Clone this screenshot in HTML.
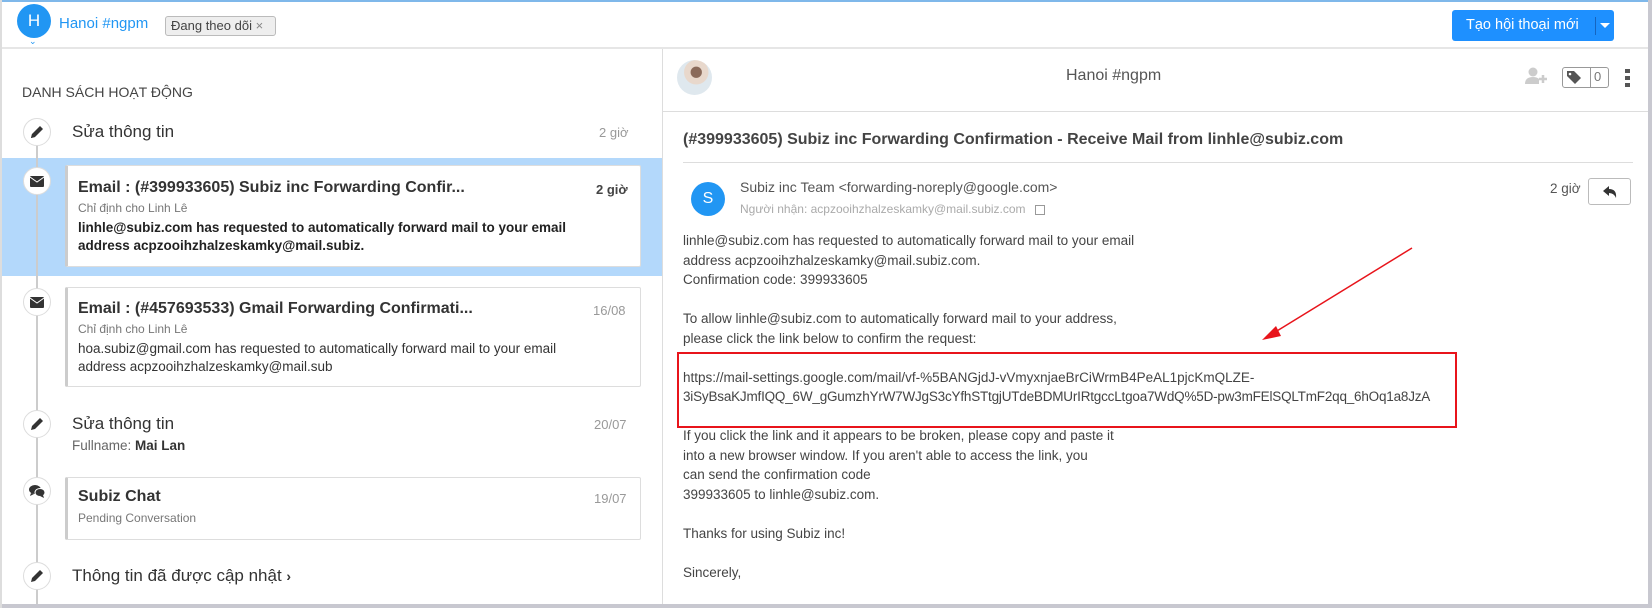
<!DOCTYPE html>
<html><head><meta charset="utf-8"><style>
*{margin:0;padding:0;box-sizing:border-box}
body{width:1652px;height:608px;overflow:hidden;background:#fff;font-family:"Liberation Sans",sans-serif;color:#333;position:relative}
.a{position:absolute;white-space:nowrap}
.circ{position:absolute;width:28px;height:28px;border-radius:50%;background:#fff;border:1px solid #ddd;display:flex;align-items:center;justify-content:center;left:23px}
.card{position:absolute;left:65px;width:576px;background:#fff;border:1px solid #ddd;border-left:3px solid #ccc;border-radius:2px}
.t{color:#999;font-size:13px}
.body{position:absolute;left:683px;top:231px;font-size:13.5px;line-height:19.5px;color:#444;white-space:pre}
</style></head><body>
<div class="a" style="left:0;top:0;width:1652px;height:2px;background:#7fb8ea"></div>
<div class="a" style="left:0;top:47px;width:1652px;height:2px;background:#e6e6e6"></div>
<div class="a" style="left:17px;top:4px;width:34px;height:34px;border-radius:50%;background:#2196f3;color:#fff;font-size:17px;text-align:center;line-height:34px">H</div>
<div class="a" style="left:29px;top:36px;color:#2196f3;font-size:9px">&#8964;</div>
<div class="a" style="left:59px;top:15px;color:#2196f3;font-size:15px">Hanoi #ngpm</div>
<div class="a" style="left:165px;top:16px;width:111px;height:20px;background:#eee;border:1px solid #bbb;border-radius:3px;font-size:13px;line-height:18px;padding-left:5px;color:#444">Đang theo dõi <span style="color:#888">×</span></div>
<div class="a" style="left:1452px;top:10px;width:162px;height:31px;background:#1e90ff;border-radius:3px;color:#fff;font-size:14.5px;line-height:31px;padding-left:14px">Tạo hội thoại mới</div>
<div class="a" style="left:1595px;top:17px;width:1px;height:18px;background:#1565c0"></div>
<div class="a" style="left:1600px;top:23px;width:0;height:0;border-left:5px solid transparent;border-right:5px solid transparent;border-top:5px solid #fff"></div>

<!-- left -->
<div class="a" style="left:662px;top:49px;width:1px;height:559px;background:#ddd"></div>
<div class="a" style="left:22px;top:84px;font-size:14px;color:#444">DANH SÁCH HOẠT ĐỘNG</div>
<div class="a" style="left:0;top:158px;width:662px;height:118px;background:#b3d8fb"></div>
<div class="a" style="left:36px;top:140px;width:2px;height:468px;background:#ccc"></div>

<div class="circ" style="top:118px"><svg width="14" height="14"><path d="M1 13l1-4 8-8 3 3-8 8z" fill="#333"/><path d="M1 13l1-4 3 3z" fill="#333"/></svg></div>
<div class="a" style="left:72px;top:122px;font-size:17px;color:#333">Sửa thông tin</div>
<div class="a t" style="left:599px;top:125px">2 giờ</div>

<div class="circ" style="top:167px"><svg width="14" height="11"><rect width="14" height="11" rx="1" fill="#333"/><path d="M0 1L7 6L14 1" stroke="#fff" fill="none"/></svg></div>
<div class="card" style="top:165px;height:102px"></div>
<div class="a" style="left:78px;top:179px;font-size:16px;font-weight:bold">Email : (#399933605) Subiz inc Forwarding Confir...</div>
<div class="a" style="left:596px;top:182px;font-size:13px;font-weight:bold;color:#444">2 giờ</div>
<div class="a t" style="left:78px;top:201px;font-size:12px;color:#777">Chỉ định cho Linh Lê</div>
<div class="a" style="left:78px;top:219px;font-size:13.5px;font-weight:bold;line-height:18px;color:#222">linhle@subiz.com has requested to automatically forward mail to your email<br>address acpzooihzhalzeskamky@mail.subiz.</div>

<div class="circ" style="top:288px"><svg width="14" height="11"><rect width="14" height="11" rx="1" fill="#333"/><path d="M0 1L7 6L14 1" stroke="#fff" fill="none"/></svg></div>
<div class="card" style="top:287px;height:100px"></div>
<div class="a" style="left:78px;top:300px;font-size:16px;font-weight:bold">Email : (#457693533) Gmail Forwarding Confirmati...</div>
<div class="a t" style="left:593px;top:303px">16/08</div>
<div class="a t" style="left:78px;top:322px;font-size:12px;color:#777">Chỉ định cho Linh Lê</div>
<div class="a" style="left:78px;top:340px;font-size:13.5px;line-height:18px;color:#333">hoa.subiz@gmail.com has requested to automatically forward mail to your email<br>address acpzooihzhalzeskamky@mail.sub</div>

<div class="circ" style="top:410px"><svg width="14" height="14"><path d="M1 13l1-4 8-8 3 3-8 8z" fill="#333"/></svg></div>
<div class="a" style="left:72px;top:414px;font-size:17px">Sửa thông tin</div>
<div class="a t" style="left:594px;top:417px">20/07</div>
<div class="a" style="left:72px;top:438px;font-size:13.5px;color:#666">Fullname: <b style="color:#333">Mai Lan</b></div>

<div class="circ" style="top:477px"><svg width="16" height="14"><ellipse cx="6" cy="5.5" rx="6" ry="4.5" fill="#333"/><path d="M2 9l-1 3 4-2z" fill="#333"/><ellipse cx="11" cy="8.5" rx="5" ry="4" fill="#333" stroke="#fff" stroke-width="1"/><path d="M14 11l1 3-4-2z" fill="#333"/></svg></div>
<div class="card" style="top:477px;height:63px"></div>
<div class="a" style="left:78px;top:488px;font-size:16px;font-weight:bold">Subiz Chat</div>
<div class="a t" style="left:594px;top:491px">19/07</div>
<div class="a" style="left:78px;top:511px;font-size:12px;color:#777">Pending Conversation</div>

<div class="circ" style="top:562px"><svg width="14" height="14"><path d="M1 13l1-4 8-8 3 3-8 8z" fill="#333"/></svg></div>
<div class="a" style="left:72px;top:566px;font-size:17px">Thông tin đã được cập nhật <b style="font-size:14px">›</b></div>

<!-- right -->
<div class="a" style="left:677px;top:60px;width:35px;height:35px;border-radius:50%;background:radial-gradient(circle at 55% 35%,#8a6a5a 0 18%,#e8d8cc 20% 40%,#dfe8ee 42%)"></div>
<div class="a" style="left:1066px;top:67px;font-size:16px;color:#555">Hanoi #ngpm</div>
<div class="a" style="left:1524px;top:67px;width:22px;height:18px"><svg width="24" height="18"><circle cx="9" cy="5" r="4.5" fill="#ccc"/><path d="M1 17 Q1 10 9 10 Q13 10 15 12 L15 17Z" fill="#ccc"/><path d="M19 8v8M15 12h8" stroke="#ccc" stroke-width="2.5"/></svg></div>
<div class="a" style="left:1562px;top:67px;width:47px;height:21px;border:1px solid #999;border-radius:3px"></div>
<div class="a" style="left:1567px;top:71px"><svg width="14" height="13"><path d="M0 0h7l7 7-6 6-8-8z" fill="#555"/><circle cx="3" cy="3" r="1.3" fill="#fff"/></svg></div>
<div class="a" style="left:1590px;top:68px;width:1px;height:19px;background:#999"></div>
<div class="a" style="left:1594px;top:69px;font-size:13px;color:#777">0</div>
<div class="a" style="left:1625px;top:68px;width:5px;height:20px"><svg width="5" height="20"><rect y="1" width="5" height="4" fill="#555"/><rect y="8" width="5" height="4" fill="#555"/><rect y="15" width="5" height="4" fill="#555"/></svg></div>
<div class="a" style="left:663px;top:111px;width:989px;height:1px;background:#ddd"></div>

<div class="a" style="left:683px;top:131px;font-size:16px;font-weight:bold;color:#444">(#399933605) Subiz inc Forwarding Confirmation - Receive Mail from linhle@subiz.com</div>
<div class="a" style="left:683px;top:162px;width:950px;height:1px;background:#ddd"></div>
<div class="a" style="left:691px;top:182px;width:34px;height:34px;border-radius:50%;background:#2196f3;color:#fff;font-size:16px;text-align:center;line-height:34px">S</div>
<div class="a" style="left:740px;top:179px;font-size:14px;color:#555">Subiz inc Team &lt;forwarding-noreply@google.com&gt;</div>
<div class="a" style="left:740px;top:202px;font-size:12px;color:#aaa">Người nhận: acpzooihzhalzeskamky@mail.subiz.com <span style="display:inline-block;width:10px;height:10px;border:1px solid #999;margin-left:6px;vertical-align:middle"></span></div>
<div class="a" style="left:1550px;top:181px;font-size:13.5px;color:#555">2 giờ</div>
<div class="a" style="left:1588px;top:178px;width:43px;height:27px;border:1px solid #bbb;border-radius:3px"></div>
<div class="a" style="left:1603px;top:185px"><svg width="14" height="12"><path d="M0 5L6 0V3Q14 3 13 12Q11 7 6 7V10Z" fill="#333"/></svg></div>

<div class="body">linhle@subiz.com has requested to automatically forward mail to your email
address acpzooihzhalzeskamky@mail.subiz.com.
Confirmation code: 399933605

To allow linhle@subiz.com to automatically forward mail to your address,
please click the link below to confirm the request:

https://mail-settings.google.com/mail/vf-%5BANGjdJ-vVmyxnjaeBrCiWrmB4PeAL1pjcKmQLZE-
<span style="letter-spacing:-0.2px">3iSyBsaKJmfIQQ_6W_gGumzhYrW7WJgS3cYfhSTtgjUTdeBDMUrIRtgccLtgoa7WdQ%5D-pw3mFElSQLTmF2qq_6hOq1a8JzA</span>

If you click the link and it appears to be broken, please copy and paste it
into a new browser window. If you aren't able to access the link, you
can send the confirmation code
399933605 to linhle@subiz.com.

Thanks for using Subiz inc!

Sincerely,</div>
<div class="a" style="left:677px;top:352px;width:780px;height:76px;border:2px solid #e8141b"></div>
<svg class="a" style="left:0;top:0" width="1652" height="608"><line x1="1412" y1="248" x2="1272" y2="334" stroke="#e8141b" stroke-width="1.5"/><path d="M1262 340 L1276 326 L1281 336 Z" fill="#e8141b"/></svg>

<div class="a" style="left:1648px;top:0;width:4px;height:608px;background:#c8c8d0"></div>
<div class="a" style="left:0;top:604px;width:1652px;height:4px;background:#c8c8d0"></div>
<div class="a" style="left:0;top:0;width:2px;height:608px;background:#ddd"></div>
</body></html>
